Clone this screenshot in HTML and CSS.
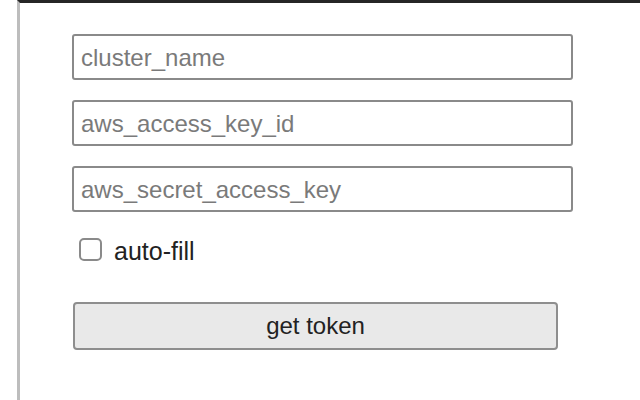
FILE: index.html
```html
<!DOCTYPE html>
<html>
<head>
<meta charset="utf-8">
<link rel="stylesheet" href="styles.css">
</head>
<body>
<div class="window">
  <form class="form">
    <input class="field" type="text" placeholder="cluster_name">
    <input class="field" type="text" placeholder="aws_access_key_id">
    <input class="field" type="text" placeholder="aws_secret_access_key">
    <label class="check-row">
      <input class="check" type="checkbox">
      <span class="check-label">auto-fill</span>
    </label>
    <button class="btn" type="button">get token</button>
  </form>
</div>
</body>
</html>
```

FILE: styles.css
```css
html, body {
  margin: 0;
  padding: 0;
  background: #ffffff;
}

.window {
  margin-left: 17px;
  height: 400px;
  box-sizing: border-box;
  border-top: 3px solid #262626;
  border-left: 3px solid #bdbdbd;
  padding: 31px 0 0 52px;
  font-family: "Liberation Sans", Arial, sans-serif;
}

.form {
  display: flex;
  flex-direction: column;
  align-items: flex-start;
  width: 501px;
}

.field {
  width: 501px;
  height: 46px;
  box-sizing: border-box;
  margin: 0 0 20px 0;
  padding: 2px 7px 0 7px;
  border: 2px solid #8a8a8a;
  border-radius: 3px;
  font-family: "Liberation Sans", Arial, sans-serif;
  font-size: 24px;
  color: #222;
  background: #fff;
  outline: none;
}

.field::placeholder {
  color: #7a7a7a;
}

.field:last-of-type {
  margin-bottom: 0;
}

.check-row {
  display: flex;
  align-items: center;
  gap: 12px;
  margin: 26px 0 0 7px;
  height: 23px;
  cursor: pointer;
}

.check {
  appearance: none;
  -webkit-appearance: none;
  margin: 0;
  width: 23px;
  height: 23px;
  box-sizing: border-box;
  border: 2px solid #8a8a8a;
  border-radius: 5px;
  background: #fff;
}

.check-label {
  font-size: 25px;
  color: #222;
  line-height: 1;
  padding-top: 4px;
}

.btn {
  margin: 41px 0 0 1px;
  width: 485px;
  height: 48px;
  box-sizing: border-box;
  border: 2px solid #8e8e8e;
  border-radius: 4px;
  background: #e9e9e9;
  font-family: "Liberation Sans", Arial, sans-serif;
  font-size: 24px;
  color: #222;
  padding: 0;
}
```
